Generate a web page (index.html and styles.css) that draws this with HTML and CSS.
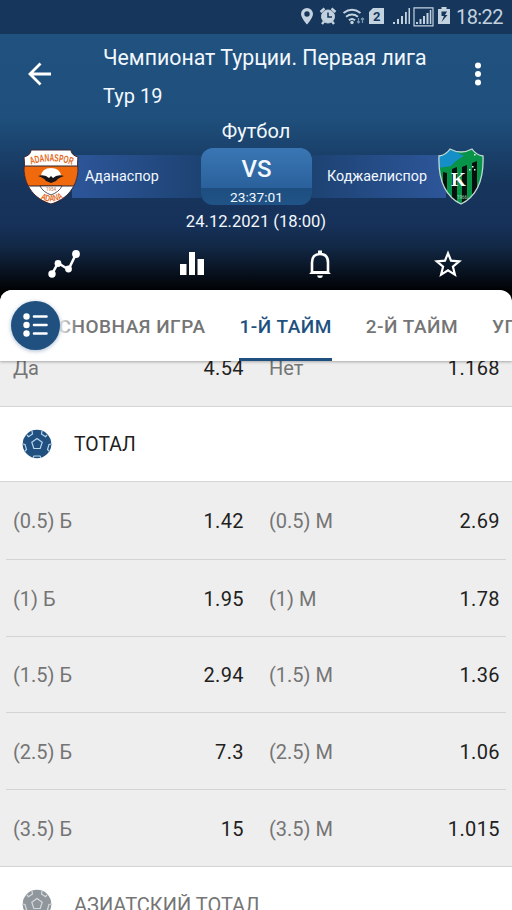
FILE: index.html
```
<!DOCTYPE html>
<html lang="ru">
<head>
  <meta charset="utf-8">
  <title>Чемпионат Турции. Первая лига</title>
  <link rel="stylesheet" href="styles.css">
</head>
<body>
  <div class="statusBar">
    <svg class="statusIcons" width="152" height="20" viewBox="0 0 152 20">
      <path fill="#c3d2df" fill-rule="evenodd" d="M8 1a6 6 0 0 0-6 6c0 4 6 10.500 6 10.500S14 11 14 7a6 6 0 0 0-6-6zm0 3.300a2.700 2.700 0 1 1 0 5.400 2.700 2.700 0 0 1 0-5.400z"/>
      <g fill="none" stroke="#c3d2df">
        <circle cx="29" cy="9.500" r="6.500" fill="#c3d2df"/>
        <path stroke-width="2.400" d="M21.500 5l4-3.500M36.500 5l-4-3.500M25 14.500l-2 2.500M33 14.500l2 2.500"/>
        <path stroke="#16365c" stroke-width="1.500" d="M29 5.500V10h4"/>
        <path stroke-width="2" d="M44.500 6q8.500-6.500 17 0M47 9.800q6-4.500 12 0M50 13.300q3-2.600 6 0"/>
        <path stroke="#7d98b0" stroke-width="1.200" d="M59.500 11v5m-1.500-1.500 1.500 1.500 1.500-1.500M63.500 16v-5m-1.500 1.500 1.500-1.500 1.500 1.500"/>
      </g>
      <circle cx="53" cy="15.500" r="1.700" fill="#c3d2df"/>
      <path fill="#c3d2df" d="M74 1h11v16H70V5z"/>
      <path fill="#c3d2df" d="M94 15h2v2h-2zM98 12h2v5h-2zM102 9h2v8h-2zM106 5h1.800v12H106zM109.500 1h1.500v16h-1.500z"/>
      <path fill="none" stroke="#c3d2df" stroke-width="1.200" d="M115 .8h19v18h-19z"/>
      <path fill="#c3d2df" d="M117 15h2v2h-2zM120.500 12h2v5h-2zM124 9h2v8h-2zM127.500 6h2v11h-2zM130.800 3h1.500v14h-1.500z"/>
      <path fill="#c3d2df" d="M142.500 0h5v2h3.500v15h-12V2h3.500z"/>
      <path fill="#16365c" d="M148 4.500h-5.500V9h2.500l-2.500 6 6-7h-2.500z"/>
      <text class="simText" x="74" y="14">2</text>
    </svg>
    <span class="clock">18:22</span>
  </div>

  <div class="header">
    <div class="toolbar">
      <svg class="back" width="26" height="26" viewBox="0 0 26 26"><path d="M24 13H3M13.500 2.500L3 13l10.500 10.500"/></svg>
      <div class="title">
        <div class="league">Чемпионат Турции. Первая лига</div>
        <div class="round">Тур 19</div>
      </div>
      <svg class="more" width="8" height="24" viewBox="0 0 8 24"><circle cx="4" cy="3.500" r="3"/><circle cx="4" cy="12" r="3"/><circle cx="4" cy="20.500" r="3"/></svg>
    </div>

    <div class="sport">Футбол</div>
    <div class="match">
      <svg class="logo" width="58" height="58" viewBox="0 0 58 58">
        <defs>
          <clipPath id="adana"><path d="M9 2h40q0 5 7 7-1 7 0 13c-1 16-10 29-27 34C12 51 3 38 2 22q1-6 0-13 7-2 7-7z"/></clipPath>
          <path id="arcTop" d="M8 17Q29 9.500 50 17"/>
          <path id="arcBottom" d="M15 48.500Q29 58.500 43 48.500"/>
        </defs>
        <g clip-path="url(#adana)">
          <path fill="#fff" d="M0 0h58v58H0z"/>
          <path fill="#f0690c" stroke="#2a2430" d="M0 18h58v20H0z"/>
        </g>
        <path fill="none" stroke="#3b2630" stroke-width="1" d="M9 2h40q0 5 7 7-1 7 0 13c-1 16-10 29-27 34C12 51 3 38 2 22q1-6 0-13 7-2 7-7z"/>
        <path fill="#fff" stroke="#2a2430" stroke-width=".8" d="M18 38h22q-3 6-11 9-8-3-11-9z"/>
        <path fill="#fff" d="M19 28q1-8 10-8t10 8l-10 4z"/>
        <path fill="#17151b" d="M16 28q7-2 11 2l2-2 2 2q4-4 11-2-6 2-8 5l-5 2-5-2q-2-3-8-5z"/>
        <text class="crestText" textLength="42" lengthAdjust="spacingAndGlyphs"><textPath href="#arcTop" startOffset="1">ADANASPOR</textPath></text>
        <text class="crestText small" textLength="24" lengthAdjust="spacingAndGlyphs"><textPath href="#arcBottom" startOffset="4">ADANA</textPath></text>
        <text class="crestYear" x="24" y="42.500">1954</text>
      </svg>
      <div class="team home">Аданаспор</div>
      <div class="versus">
        <div class="vs">VS</div>
        <div class="countdown">23:37:01</div>
      </div>
      <div class="team away">Коджаелиспор</div>
      <svg class="logo" width="46" height="58" viewBox="0 0 46 58">
        <defs><clipPath id="kocaeli"><path d="M12 1q11 6 22 0 4 6 11 7c1 25-6 40-22 48C7 48 0 33 1 8q7-1 11-7z"/></clipPath></defs>
        <g clip-path="url(#kocaeli)">
          <path fill="#079348" d="M0 0h46v58H0z"/>
          <path fill="#168fc9" d="M0 0h13q7 6 13 8-8 4-13 10L0 20z"/>
          <path fill="#06100f" d="M5 24l4 1v26H5zM14 21l5-2v37h-5zM24 19l5-2v40h-5zM34 15l5-2v40h-5z"/>
        </g>
        <path fill="none" stroke="#c2d8d5" stroke-width="1.300" d="M12 1q11 6 22 0 4 6 11 7c1 25-6 40-22 48C7 48 0 33 1 8q7-1 11-7z"/>
        <text class="crestK" x="13" y="38">K</text>
        <text class="crestYear light" x="19" y="51">1966</text>
        <path fill="#e4f6ea" d="M36 6h1.500v1.500H36zM34 18h1.500v1.500H34zM31 21h1.500v1.500H31zM36 21h1.500v1.500H36z"/>
      </svg>
    </div>
    <div class="date">24.12.2021 (18:00)</div>

    <div class="actions">
      <div class="action"><svg width="34" height="30" viewBox="0 0 34 30"><path fill="none" stroke="#fff" stroke-width="2.600" d="M5 25l6-11 10.500 6.500L29 5"/><g fill="#fff"><circle cx="5" cy="25" r="3.700"/><circle cx="11" cy="14.500" r="3.400"/><circle cx="21.500" cy="20" r="3.400"/><circle cx="29" cy="5" r="3.900"/></g></svg></div>
      <div class="action"><svg width="24" height="24" viewBox="0 0 24 24"><path fill="#fff" d="M0 12h6.500v11H0zM9 0h6v23H9zM17.500 7H24v16h-6.500z"/></svg></div>
      <div class="action"><svg width="24" height="30" viewBox="0 0 24 30"><path fill="none" stroke="#fff" stroke-width="2.600" d="M4 24V13.500Q4 5 12 5t8 8.500V24"/><path fill="#fff" d="M10 1.500h4V5h-4zM1 25l3-3h16l3 3zM9 26.500h6q-.5 2.500-3 2.500t-3-2.500z"/></svg></div>
      <div class="action"><svg width="30" height="30" viewBox="0 0 30 30"><path fill="none" stroke="#fff" stroke-width="2.200" d="M15 4.200l3 7.500 8.200.7-6.300 5.200 2 8L15 21.300l-6.900 4.300 2-8-6.300-5.200 8.200-.7z"/></svg></div>
    </div>
  </div>

  <div class="tabs">
    <div class="tabStrip">
      <div class="tab">ОСНОВНАЯ ИГРА</div>
      <div class="tab active">1-Й ТАЙМ</div>
      <div class="tab">2-Й ТАЙМ</div>
      <div class="tab">УГЛОВЫЕ</div>
    </div>
    <div class="menuFade">
      <div class="menuButton">
        <svg width="26" height="24" viewBox="0 0 26 24"><g fill="#fff"><circle cx="3.500" cy="3.500" r="3.200"/><circle cx="3.500" cy="12" r="3.200"/><circle cx="3.500" cy="20.500" r="3.200"/></g><path stroke="#fff" stroke-width="2.600" stroke-linecap="round" d="M11 3.500h12.500M11 12h12.500M11 20.500h12.500"/></svg>
      </div>
    </div>
  </div>

  <div class="markets">
    <div class="row last"><span class="name">Да</span><span class="odd">4.54</span><span class="name">Нет</span><span class="odd">1.168</span></div>

    <div class="section">
      <svg class="ball" width="30" height="30" viewBox="0 0 30 30"><circle cx="15" cy="15" r="14.300"/><path d="M15 9.500l5.200 3.800-2 6.200h-6.400l-2-6.200zM5 6l1.500 1.700 4-2.700-.5-3M20 2l-.5 3 4 2.700L25 6M.5 15l2.500.5 1.500 5-2 2M29.500 15l-2.500.5-1.500 5 2 2M11 29l1-2h6l1 2"/></svg>
      <span>ТОТАЛ</span>
    </div>
    <div class="row"><span class="name">(0.5) Б</span><span class="odd">1.42</span><span class="name">(0.5) М</span><span class="odd">2.69</span></div>
    <div class="row"><span class="name">(1) Б</span><span class="odd">1.95</span><span class="name">(1) М</span><span class="odd">1.78</span></div>
    <div class="row"><span class="name">(1.5) Б</span><span class="odd">2.94</span><span class="name">(1.5) М</span><span class="odd">1.36</span></div>
    <div class="row"><span class="name">(2.5) Б</span><span class="odd">7.3</span><span class="name">(2.5) М</span><span class="odd">1.06</span></div>
    <div class="row last"><span class="name">(3.5) Б</span><span class="odd">15</span><span class="name">(3.5) М</span><span class="odd">1.015</span></div>

    <div class="section closed">
      <svg class="ball" width="30" height="30" viewBox="0 0 30 30"><circle cx="15" cy="15" r="14.300"/><path d="M15 9.500l5.200 3.800-2 6.200h-6.400l-2-6.200zM5 6l1.500 1.700 4-2.700-.5-3M20 2l-.5 3 4 2.700L25 6M.5 15l2.500.5 1.500 5-2 2M29.500 15l-2.500.5-1.500 5 2 2M11 29l1-2h6l1 2"/></svg>
      <span>АЗИАТСКИЙ ТОТАЛ</span>
    </div>
  </div>
</body>
</html>
```
FILE: styles.css
```
* {
  box-sizing: border-box;
}

body {
  margin: 0;
  width: 512px;
  height: 910px;
  overflow: hidden;
  background: #eee;
  font-family: Roboto, "Noto Sans", sans-serif;
  color: #212121;
}

svg {
  display: block;
  flex: none;
}

/* status bar */
.statusBar {
  display: flex;
  justify-content: flex-end;
  align-items: center;
  height: 34px;
  padding-right: 9px;
  background: #16365c;
}

.statusIcons {
  margin-right: 5px;
}

.simText {
  font-size: 13px;
  font-weight: bold;
  fill: #16365c;
}

.clock {
  width: 47px;
  font-size: 20px;
  line-height: 34px;
  letter-spacing: -0.6px;
  color: #c3d2df;
  white-space: nowrap;
}

/* match header */
.header {
  height: 268px;
  color: #f2f8fd;
  background: linear-gradient(#20517f 0, #1f507d 82px, #1a426c 115px, #17355c 150px, #16315a 190px, #122845 213px, #08121f 238px, #010204 256px);
}

.toolbar {
  display: flex;
  height: 82px;
  padding-left: 27px;
}

.back {
  margin-top: 27px;
  fill: none;
  stroke: #fff;
  stroke-width: 2.8;
}

.title {
  width: 370px;
  margin-left: 50px;
  padding-top: 5px;
  line-height: 38px;
  white-space: nowrap;
}

.league {
  font-size: 21.3px;
}

.round {
  font-size: 20px;
}

.more {
  margin: 28px 0 0 1px;
  fill: #fff;
}

.sport {
  height: 32px;
  font-size: 20px;
  line-height: 30px;
  text-align: center;
}

.match {
  display: flex;
  align-items: center;
  height: 57px;
  padding: 0 28px 0 22px;
}

.logo {
  position: relative;
  z-index: 1;
}

.team {
  height: 43px;
  font-size: 14.3px;
  line-height: 43px;
  white-space: nowrap;
}

.home {
  width: 129px;
  margin-left: -8px;
  padding-left: 13px;
  background: linear-gradient(to right, #2d569a, #1d4373);
}

.away {
  flex: 1;
  margin-right: -8px;
  padding-left: 15px;
  background: linear-gradient(to left, #2d569a, #1d4373);
}

.versus {
  width: 111px;
  height: 57px;
  border-radius: 12px;
  background: linear-gradient(#3a76b4, #2a619c 40px, #1e4e80 40px, #205387);
  text-align: center;
}

.vs {
  height: 40px;
  font-size: 24px;
  font-weight: 500;
  line-height: 42px;
}

.countdown {
  font-size: 13.7px;
  line-height: 18px;
}

.date {
  height: 32px;
  font-size: 16.6px;
  line-height: 33px;
  text-align: center;
}

.crestText {
  font: bold 10.5px "Liberation Sans", sans-serif;
  fill: #e36a1c;
}

.small {
  font-size: 9px;
}

.crestYear {
  font-size: 4.5px;
  fill: #c66a35;
}

.light {
  fill: #a7d8ba;
}

.crestK {
  font: bold 19px "Liberation Serif", serif;
  fill: #fff;
}

.actions {
  display: flex;
  height: 54px;
}

.action {
  display: flex;
  flex: 1;
  align-items: center;
  justify-content: center;
}

/* tabs */
.tabs {
  position: relative;
  z-index: 2;
  height: 71px;
  margin-top: -12px;
  border-radius: 12px 12px 0 0;
  background: #fff;
  box-shadow: 0 1px 3px rgba(0, 0, 0, 0.3);
}

.tabStrip {
  display: flex;
  gap: 34px;
  height: 71px;
  padding-left: 45px;
  overflow: hidden;
}

.tab {
  flex: none;
  height: 71px;
  font-size: 19px;
  font-weight: 500;
  line-height: 73px;
  letter-spacing: 0.5px;
  color: #757575;
}

.active {
  color: #205080;
  border-bottom: 3px solid #205080;
}

.menuFade {
  position: absolute;
  left: 0;
  top: 0;
  display: flex;
  width: 84px;
  height: 71px;
  padding-left: 11px;
  align-items: center;
  border-radius: 12px 0 0 0;
  background: linear-gradient(to right, #fff 56px, rgba(255, 255, 255, 0) 78px);
}

.menuButton {
  width: 49px;
  height: 49px;
  padding: 12px 0 0 12px;
  border-radius: 50%;
  background: #205080;
  box-shadow: 0 1px 4px rgba(32, 80, 128, 0.4);
}

/* odds */
.markets {
  margin-top: -32px;
}

.row {
  display: grid;
  grid-template-columns: 128px 103px 153px 103px;
  align-items: center;
  height: 76.8px;
  margin: 0 6px;
  padding: 2px 7px 0;
  border-bottom: 1px solid #d4d4d4;
  font-size: 20px;
}

.row .name {
  color: #757575;
}

.row .name:nth-child(3) {
  padding-left: 25px;
}

.row .odd {
  letter-spacing: 0.4px;
  text-align: right;
}

.last {
  border-bottom-color: transparent;
}

.section {
  display: flex;
  align-items: center;
  height: 76px;
  padding-left: 22px;
  border-top: 1px solid #d4d4d4;
  border-bottom: 1px solid #d4d4d4;
  background: #fff;
  font-size: 19.4px;
}

.section + .row {
  height: 78px;
}

.row + .section.closed {
  margin-top: -1px;
}

.section span {
  margin-left: 22px;
  padding-top: 2px;
}

.ball {
  fill: #205080;
  stroke: #b9d5ec;
  stroke-width: 1.2;
}

.ball circle {
  stroke: none;
}

.closed {
  color: #757575;
  font-size: 20px;
}

.closed .ball {
  fill: #90979c;
  stroke: #d5d9dc;
}
```
